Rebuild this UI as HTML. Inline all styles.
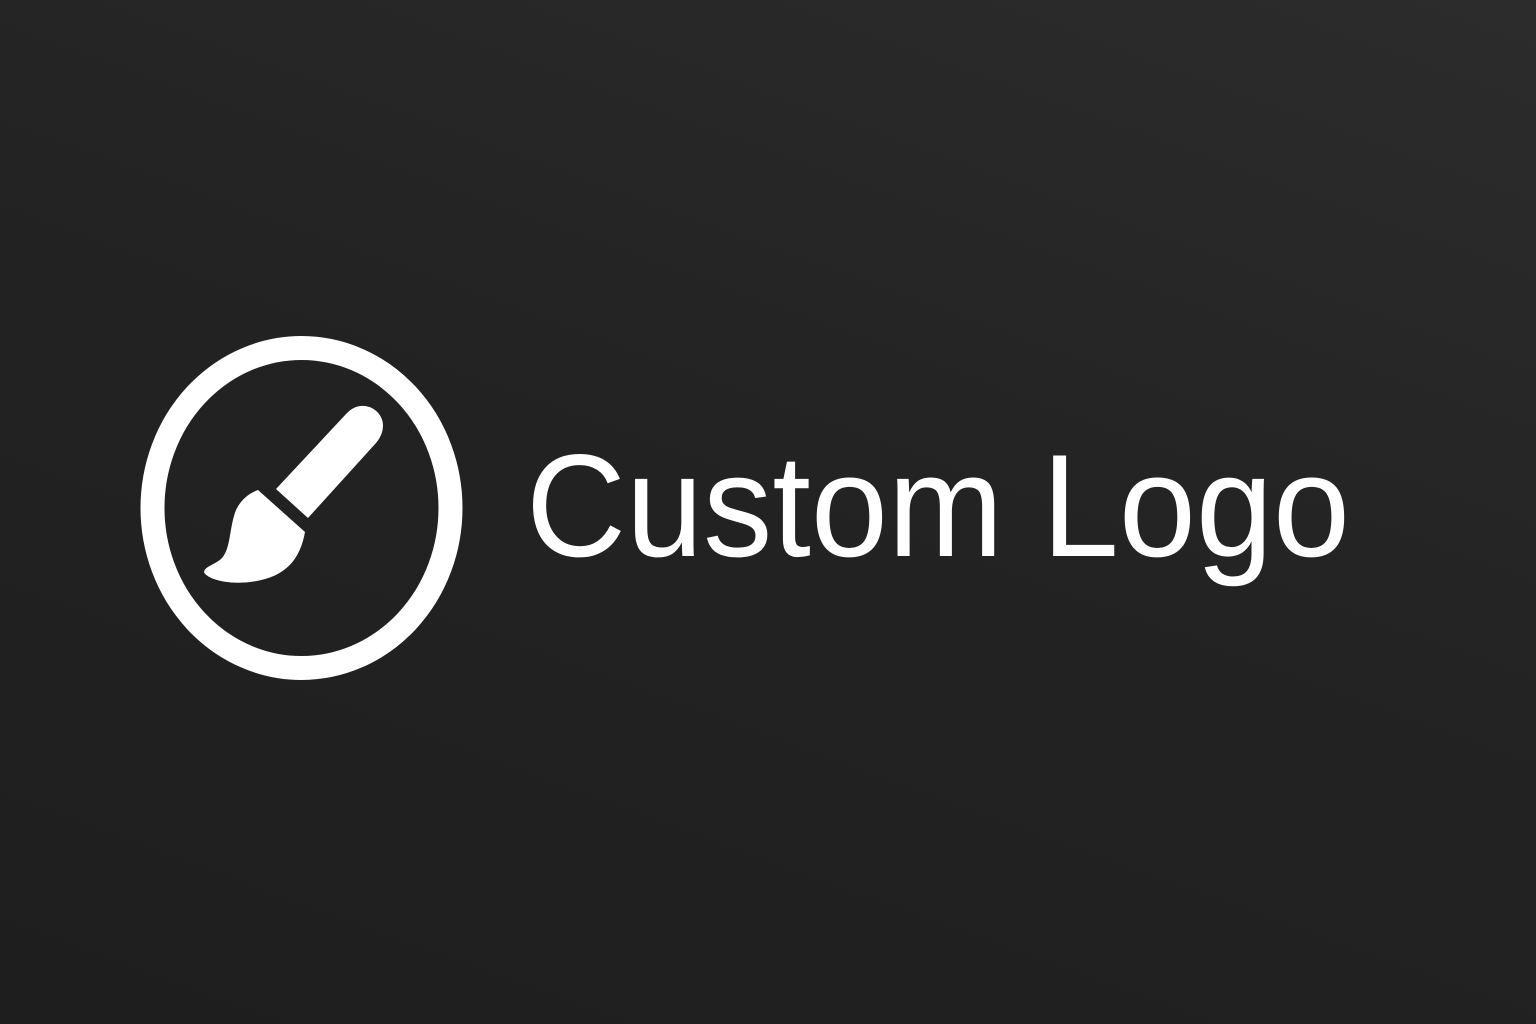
<!DOCTYPE html>
<html><head><meta charset="utf-8"><style>
html,body{margin:0;padding:0;width:1536px;height:1024px;overflow:hidden;background:linear-gradient(200deg,#2c2c2c 0%,#232323 45%,#1e1e1e 100%);}
</style></head><body>
<svg width="1536" height="1024" viewBox="0 0 1536 1024" style="position:absolute;left:0;top:0">
<ellipse cx="301.5" cy="508" rx="149" ry="160" fill="none" stroke="#fff" stroke-width="24"/>
<path d="M276,489 L347,413 C358,402 372,405 379,414 C386,423 383,435 376,443 L308,518 Z" fill="#fff"/>
<path d="M258,490 L305,532 C300,560 285,578 250,582 C225,585 206,578 204,572 C205,566 215,565 222,558 C231,548 229,528 236,510 C242,498 250,493 258,490 Z" fill="#fff"/>
<text x="526" y="556" font-family="Liberation Sans, sans-serif" font-size="146" fill="#fff" textLength="824" lengthAdjust="spacingAndGlyphs">Custom Logo</text>
</svg>
</body></html>
